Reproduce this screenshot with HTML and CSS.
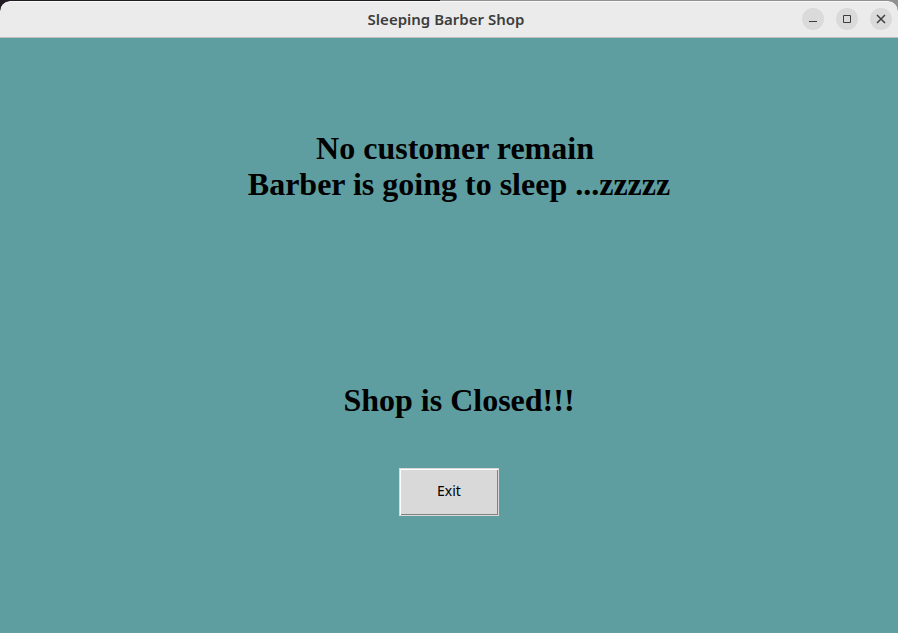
FILE: index.html
```html
<!DOCTYPE html>
<html lang="en">
<head>
<meta charset="utf-8">
<title>Sleeping Barber Shop</title>
<link rel="stylesheet" href="styles.css">
</head>
<body>
<div class="window">
<header class="titlebar">
<h1 class="title">Sleeping Barber Shop</h1>
<div class="controls">
<button class="control" type="button" aria-label="Minimize"><svg viewBox="0 0 22 22"><path d="M7 13.500h8"/></svg></button>
<button class="control" type="button" aria-label="Maximize"><svg viewBox="0 0 22 22"><path d="M7.500 7.500h7v7h-7z"/></svg></button>
<button class="control" type="button" aria-label="Close"><svg class="cross" viewBox="0 0 22 22"><path d="M7 7l8 8M15 7l-8 8"/></svg></button>
</div>
</header>
<main class="content">
<p class="message remain">No customer remain</p>
<p class="message sleep">Barber is going to sleep ...zzzzz</p>
<p class="message closed">Shop is Closed!!!</p>
<button class="exit" type="button">Exit</button>
</main>
</div>
</body>
</html>
```
FILE: styles.css
```css
* { box-sizing: border-box; }
body { display: flex; flex-direction: column; min-height: 100vh; margin: 0; padding-top: 1px; background: linear-gradient(90deg, #211c22 49%, #929092 49%); }
.window { flex: 1; display: flex; flex-direction: column; border-radius: 10px 10px 0 0; overflow: hidden; }
.titlebar { display: grid; grid-template-columns: 1fr auto 1fr; align-items: center; height: 37px; padding: 0 6px 2px 0; background: #ebebeb; border-top: 1px solid #f9f9f9; border-bottom: 1px solid #bfbfbf; border-radius: 10px 10px 0 0; }
.title { grid-column: 2; margin: 0; font: 600 15px "Noto Sans", sans-serif; color: #3d3d3d; }
.controls { display: flex; justify-content: flex-end; gap: 12px; }
.control { width: 22px; height: 22px; padding: 0; border: 0; border-radius: 50%; background: #dadada; }
.control svg { display: block; width: 22px; height: 22px; fill: none; stroke: #3d3d3d; }
.control .cross { stroke-width: 1.5; }
.content { flex: 1; display: flex; flex-direction: column; align-items: center; padding-top: 92px; background: #5f9ea0; }
.message { margin: 0; font: bold 32px/36px "Liberation Serif", serif; color: #000; }
.remain { padding-left: 12px; }
.sleep { padding-left: 20px; }
.closed { margin-top: 180px; padding-left: 20px; }
.exit { width: 100px; height: 48px; margin-top: 50px; padding: 0 0 4px; border: 1px solid #d9d9d9; background: #d9d9d9; box-shadow: inset 1px 1px #fff, inset -1px -1px #828282; color: #000; font: 14px "Noto Sans", sans-serif; }
```
